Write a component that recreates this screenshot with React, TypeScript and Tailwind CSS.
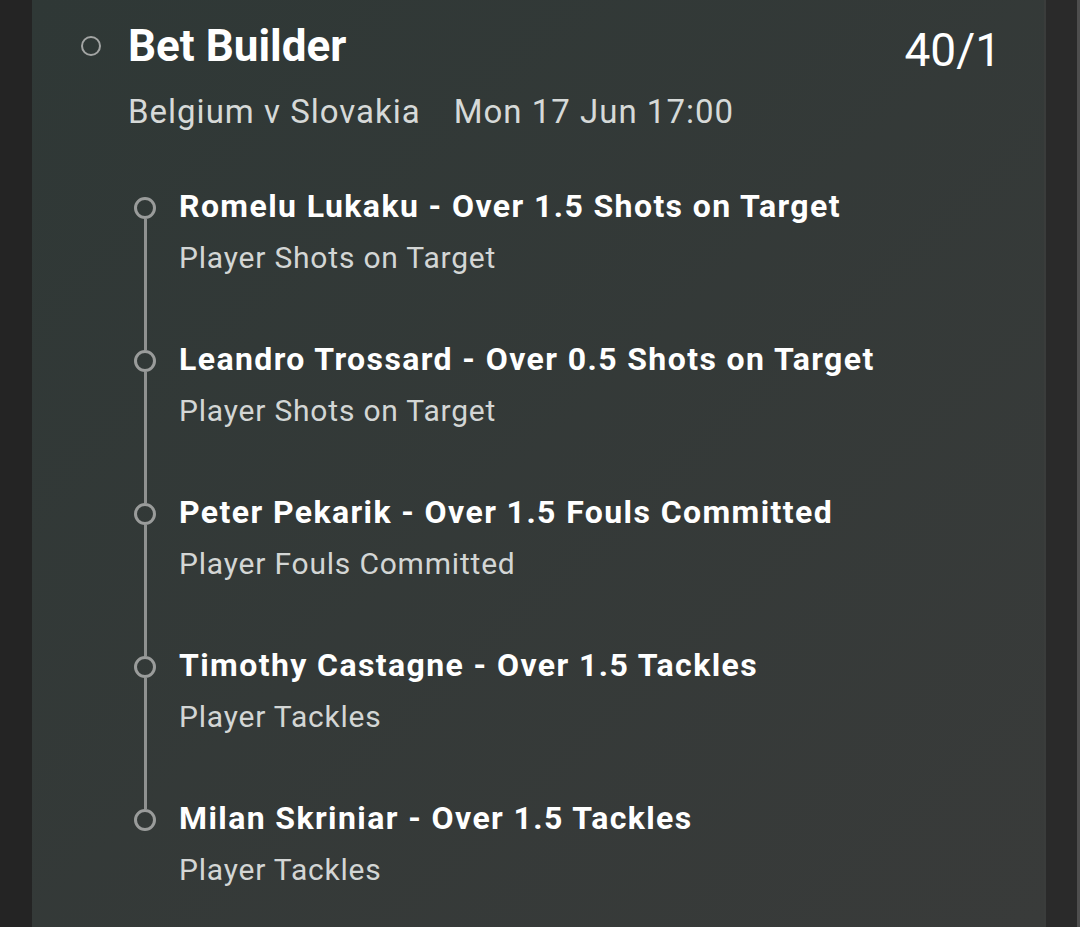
const legs = [
  { title: 'Romelu Lukaku - Over 1.5 Shots on Target', market: 'Player Shots on Target' },
  { title: 'Leandro Trossard - Over 0.5 Shots on Target', market: 'Player Shots on Target' },
  { title: 'Peter Pekarik - Over 1.5 Fouls Committed', market: 'Player Fouls Committed' },
  { title: 'Timothy Castagne - Over 1.5 Tackles', market: 'Player Tackles' },
  { title: 'Milan Skriniar - Over 1.5 Tackles', market: 'Player Tackles' },
];

function Leg({ title, market, first, last }: { title: string; market: string; first: boolean; last: boolean }) {
  return (
    <div className="flex h-[153px]">
      <div className="flex w-[22px] flex-col items-center">
        <div className={`h-[11px] w-[3px] ${first ? 'bg-transparent' : 'bg-[#8f9190]'}`} />
        <div className="h-[22px] w-[22px] shrink-0 rounded-full border-[3px] border-[#9a9c9b]" />
        <div className={`w-[3px] flex-1 ${last ? 'bg-transparent' : 'bg-[#8f9190]'}`} />
      </div>
      <div className="ml-[23px] flex flex-col">
        <div className="text-[32px] font-bold leading-[40px] tracking-[1.4px] text-white">{title}</div>
        <div className="mt-[12px] text-[30px] leading-[40px] tracking-[0.8px] text-[#d3d6d5]">{market}</div>
      </div>
    </div>
  );
}

export default function App() {
  return (
    <div className="flex h-[927px] w-[1080px] overflow-hidden bg-[#242424] font-['Roboto','Liberation_Sans',sans-serif]">
      <div className="w-[32px] shrink-0 bg-[#242424]" />
      <div className="w-[1014px] shrink-0 border-r-[2px] border-[#3a3c3b] bg-linear-to-br from-[#2f3836] to-[#393b3a] pl-[49px] pr-[43px]">
        <div className="flex items-start justify-between pt-[19px]">
          <div className="flex flex-col">
            <div className="flex items-center">
              <div className="h-[20px] w-[20px] rounded-full border-[2.5px] border-[#a3a5a4]" />
              <div className="ml-[27px] text-[44px] font-bold leading-[54px] text-white">Bet Builder</div>
            </div>
            <div className="ml-[47px] mt-[19px] flex gap-[33px] text-[33px] leading-[40px] tracking-[1px] text-[#d6d9d8]">
              <span>Belgium v Slovakia</span>
              <span>Mon 17 Jun 17:00</span>
            </div>
          </div>
          <div className="mt-[4px] text-[46px] leading-[54px] text-white">40/1</div>
        </div>
        <div className="ml-[53px] mt-[54px] flex flex-col">
          {legs.map((leg, i) => (
            <Leg key={leg.title} title={leg.title} market={leg.market} first={i === 0} last={i === legs.length - 1} />
          ))}
        </div>
      </div>
      <div className="w-[31px] shrink-0 bg-[#2a2a2a]" />
      <div className="w-[3px] shrink-0 bg-[#4e4e4e]" />
    </div>
  );
}
